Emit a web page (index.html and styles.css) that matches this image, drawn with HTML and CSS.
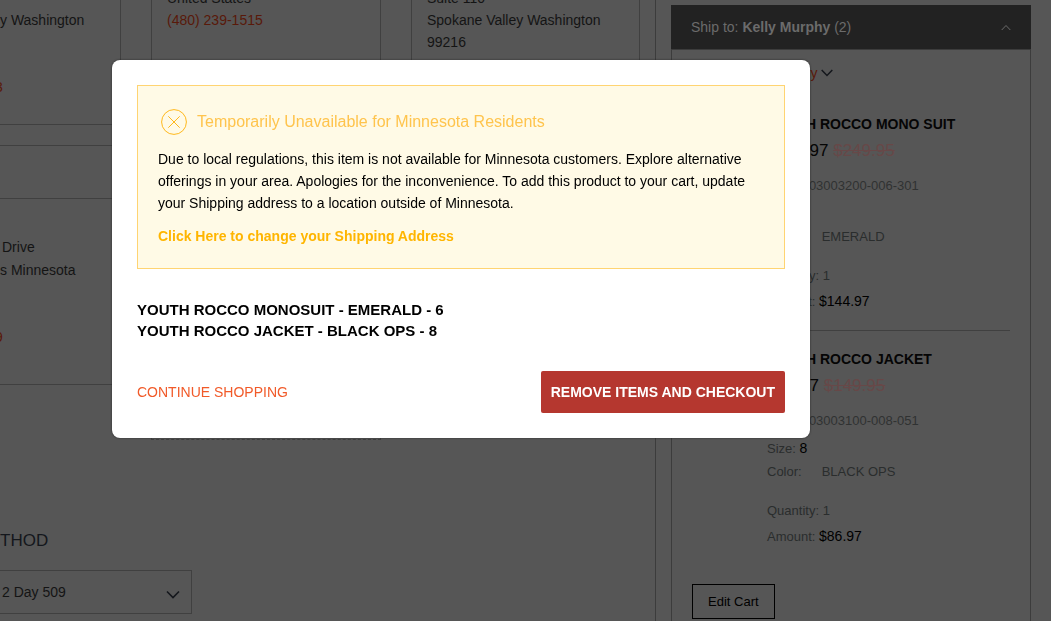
FILE: index.html
```html
<!DOCTYPE html>
<html lang="en">
<head>
<meta charset="utf-8">
<title>Checkout</title>
<link rel="stylesheet" href="styles.css">
</head>
<body>
<div class="page">
  <main class="main">
    <section class="row row-top">
      <address class="card card-cut">
        <p>y Washington</p>
        <a class="phone phone-cut" href="#">3</a>
      </address>
      <address class="card">
        <p>United States</p>
        <a class="phone" href="#">(480) 239-1515</a>
      </address>
      <address class="card">
        <p>Suite 110</p>
        <p>Spokane Valley Washington</p>
        <p>99216</p>
        <p class="country">United States</p>
      </address>
    </section>
    <section class="row row-next">
      <address class="card card-cut card-selected">
        <div class="card-head"></div>
        <p class="street">Drive</p>
        <p>s Minnesota</p>
        <a class="phone phone-cut" href="#">9</a>
      </address>
      <div class="card card-new"></div>
    </section>
    <section class="method">
      <h2><label for="method">THOD</label></h2>
      <div class="select-wrap">
        <select id="method"><option>2 Day 509</option></select>
        <svg class="select-arrow" width="14" height="9" viewBox="0 0 14 9"><path d="M1 1.500l6 6 6-6"/></svg>
      </div>
    </section>
  </main>
  <aside class="summary">
    <button class="summary-head" type="button">
      <span>Ship to: <b>Kelly Murphy</b> (2)</span>
      <svg width="10" height="7" viewBox="0 0 10 7"><path d="M.7 6L5 1.500l4.300 4.500"/></svg>
    </button>
    <div class="summary-body">
      <a class="delivery" href="#">Delivery
        <svg width="12" height="8" viewBox="0 0 12 8"><path d="M.7 1L6 6.500 11.300 1"/></svg>
      </a>
      <article class="item">
        <h3>YOUTH ROCCO MONO SUIT</h3>
        <p class="price">$144.97 <s>$249.95</s></p>
        <p class="sku">SKU: F03003200-006-301</p>
        <p class="spec">Size: <b>6</b></p>
        <p class="spec color"><span>Color:</span><span>EMERALD</span></p>
        <p class="spec quantity">Quantity: 1</p>
        <p class="spec">Amount: <b>$144.97</b></p>
      </article>
      <article class="item">
        <h3>YOUTH ROCCO JACKET</h3>
        <p class="price">$86.97 <s>$149.95</s></p>
        <p class="sku">SKU: F03003100-008-051</p>
        <p class="spec">Size: <b>8</b></p>
        <p class="spec color"><span>Color:</span><span>BLACK OPS</span></p>
        <p class="spec quantity">Quantity: 1</p>
        <p class="spec">Amount: <b>$86.97</b></p>
      </article>
      <button class="edit" type="button">Edit Cart</button>
    </div>
  </aside>
</div>
<div class="overlay">
  <div class="modal" role="dialog" aria-modal="true" aria-labelledby="modal-title">
    <div class="notice">
      <h1 id="modal-title">
        <svg width="26" height="26" viewBox="0 0 26 26"><circle cx="13" cy="13" r="12.400"/><path d="M7.300 7.300l11.400 11.400M18.700 7.300L7.300 18.700"/></svg>
        Temporarily Unavailable for Minnesota Residents
      </h1>
      <p>Due to local regulations, this item is not available for Minnesota customers. Explore alternative offerings in your area. Apologies for the inconvenience. To add this product to your cart, update your Shipping address to a location outside of Minnesota.</p>
      <a href="#">Click Here to change your Shipping Address</a>
    </div>
    <ul class="blocked">
      <li>YOUTH ROCCO MONOSUIT - EMERALD - 6</li>
      <li>YOUTH ROCCO JACKET - BLACK OPS - 8</li>
    </ul>
    <div class="actions">
      <a class="continue" href="#">CONTINUE SHOPPING</a>
      <button class="remove" type="button">REMOVE ITEMS AND CHECKOUT</button>
    </div>
  </div>
</div>
</body>
</html>
```
FILE: styles.css
```css
* { box-sizing: border-box; }
body {
  margin: 0;
  height: 100vh;
  overflow: hidden;
  background: #565656;
  color: #141414;
  font: 14px/22px "Liberation Sans", Arial, sans-serif;
}
h1, h2, h3, p, ul { margin: 0; padding: 0; }
a { text-decoration: none; }
button, select { font: inherit; margin: 0; }
svg { fill: none; stroke: currentColor; }
address { font-style: normal; }

.page {
  display: grid;
  grid-template-columns: 1fr 360px;
  gap: 15px;
  height: 100vh;
  padding-right: 20px;
}
.main { border-right: 1px solid #3c3c3c; min-width: 0; }

.row { display: grid; grid-template-columns: 121px 230px 229px; column-gap: 30px; }
.row-top { height: 125px; }
.card { border: 1px solid #404040; border-top: 0; padding: 0 15px; }
.row-top .card { display: flex; flex-direction: column; height: 138px; margin-top: -13px; }
.card-cut { padding: 0; border-left: 0; }
.row-top .card-cut { padding-top: 22px; }
.country { margin-top: 2px; }
.phone { color: #59190a; }
.phone-cut { display: block; margin-left: -5px; }
.row-top .phone-cut { margin-top: 45px; }
.row-next { margin-top: 20px; height: 295px; align-items: start; }
.card-selected { border-top: 1px solid #404040; height: 240px; }
.card-head { height: 53px; border-bottom: 1px solid #404040; }
.street { padding: 37px 0 1px 2px; }
.card-selected .phone-cut { margin-top: 45px; }
.card-new { height: 295px; border: 1px dashed #404040; }

.method { margin-top: 90px; }
.method h2 { font-size: 17px; line-height: 22px; font-weight: 400; color: #14171c; }
.select-wrap { display: grid; width: 192px; margin-top: 18px; }
.select-wrap > * { grid-area: 1 / 1; }
.method select {
  appearance: none;
  height: 44px;
  padding: 0 0 0 2px;
  border: 1px solid #404040;
  border-left: 0;
  border-radius: 0;
  background: none;
  color: #141414;
}
.select-arrow { place-self: center end; margin: 4px 12px 0 0; color: #14171c; stroke-width: 1.6; pointer-events: none; }

.summary { padding-top: 5px; display: flex; flex-direction: column; min-height: 0; }
.summary-head {
  display: flex;
  flex: none;
  justify-content: space-between;
  align-items: center;
  height: 44px;
  padding: 0 20px;
  border: 0;
  background: #222;
  color: #6b6b6b;
}
.summary-body { flex: 1; padding: 12px 20px 0; border: 1px solid #3c3c3c; border-bottom: 0; min-height: 0; }
.delivery { display: flex; align-items: center; gap: 3px; padding-left: 75px; color: #59190a; }
.delivery svg { color: #14171c; stroke-width: 1.5; }
.item { padding: 29px 0 17px 75px; border-bottom: 1px solid #404040; }
.item + .item { padding-top: 17px; border-bottom: 0; }
.item h3 { font-size: 14px; line-height: 22px; color: #050505; }
.price { height: 24px; margin-top: 4px; font-size: 17px; line-height: 24px; color: #050505; }
.price s { color: #674848; }
.sku { margin-top: 11px; font-size: 13px; line-height: 24px; color: #303232; }
.spec { height: 24px; margin-top: 1px; font-size: 13px; line-height: 24px; color: #2a2d2d; }
.spec b { font-size: 14px; font-weight: 400; color: #000; }
.sku + .spec { margin-top: 3px; }
.spec.color { display: flex; gap: 20px; margin-top: 0; }
.spec.quantity { margin-top: 15px; }
.edit { height: 35px; margin-top: 19px; padding: 0 15px; border: 1px solid #000; background: none; color: #000; font-size: 13px; }

.overlay { position: fixed; inset: 0; padding: 60px 241px 0 112px; }
.modal { padding: 25px; border-radius: 8px; background: #fff; box-shadow: 0 0 2px #222; color: #000; }
.notice { padding: 22px 20px 21px; border: 1px solid #ffd472; background: #fffae6; }
.notice h1 { display: flex; align-items: center; gap: 10px; padding-left: 3px; font-size: 16px; line-height: 28px; font-weight: 400; color: #ffc44d; }
.notice h1 svg { color: #ffb81c; }
.notice p { margin-top: 12px; line-height: 22px; }
.notice a { display: block; margin-top: 11px; font-weight: 700; color: #ffb500; }
.blocked { margin-top: 30px; list-style: none; font-size: 15px; line-height: 21px; font-weight: 700; }
.actions { display: flex; justify-content: space-between; align-items: center; margin-top: 30px; }
.continue { color: #f15a29; }
.remove { height: 42px; padding: 0 10px; border: 0; border-radius: 2px; background: #b5372f; color: #fff; font-weight: 700; }
```
